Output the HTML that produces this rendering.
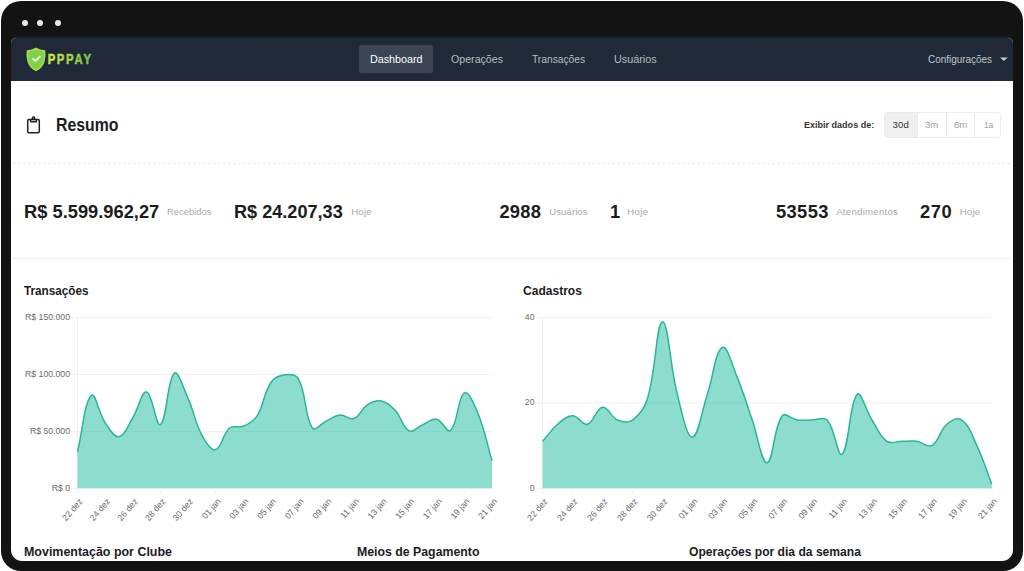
<!DOCTYPE html>
<html lang="pt-br">
<head>
<meta charset="utf-8">
<title>PPPAY - Dashboard</title>
<style>
html,body{margin:0;padding:0;background:#fff;}
body{width:1024px;height:571px;overflow:hidden;position:relative;font-family:"Liberation Sans",sans-serif;}
#frame{position:absolute;left:1.2px;top:1px;width:1021.6px;height:569.6px;background:#131313;border-radius:20px;}
#screen{position:absolute;left:11px;top:37.5px;width:1002px;height:523px;background:#fff;border-radius:5px 5px 11px 11px;overflow:hidden;}
#nav{position:absolute;left:0;top:0;width:1002px;height:43px;background:#1f2937;}
.dot{position:absolute;top:19.5px;width:6px;height:6px;border-radius:50%;background:#e9e9e9;}
#act{position:absolute;left:359px;top:44.5px;width:73.5px;height:28.5px;border-radius:3px;background:#3b4553;}
.t{position:absolute;white-space:pre;transform-origin:0 50%;font-family:"Liberation Sans",sans-serif;}
#dash{position:absolute;left:13.3px;top:163.3px;width:996.5px;height:0;border-top:1px dashed #e9e9e9;}
#sep{position:absolute;left:13.3px;top:258.4px;width:996.5px;height:1px;background:#eeeeee;}
#bg{position:absolute;left:884px;top:112px;width:116.5px;height:25.5px;border:1px solid #ececec;border-radius:3px;box-sizing:border-box;background:#fff;overflow:hidden;}
#bg i{position:absolute;top:0;width:1px;height:25px;background:#e9e9e9;}
#bg b{position:absolute;left:0;top:0;width:31.7px;height:25px;background:#f0f0f0;}
svg{position:absolute;left:0;top:0;}
.ax{font-family:"Liberation Sans",sans-serif;font-size:8.7px;fill:#6a6a6a;}
</style>
</head>
<body>
<div id="frame"></div>
<div class="dot" style="left:22px"></div>
<div class="dot" style="left:37px"></div>
<div class="dot" style="left:55px"></div>
<div style="position:absolute;left:13px;top:34.5px;width:998px;height:4px;background:linear-gradient(to bottom,#131313,#1c2430)"></div>
<div id="screen"><div id="nav"></div></div>
<div id="act"></div>
<div id="dash"></div>
<div id="sep"></div>
<div id="bg"><b></b><i style="left:31.7px"></i><i style="left:60.5px"></i><i style="left:89.2px"></i></div>
<svg width="1024" height="571" viewBox="0 0 1024 571">
<defs>
<clipPath id="clip"><rect x="11" y="37.5" width="1002" height="523" rx="8"/></clipPath>
</defs>
<!-- logo shield -->
<path d="M36 48.3 C33.4 50.2 30.6 50.9 27.4 51 C27.1 54.5 27.2 58.8 28.4 62.3 C29.8 66 32.6 68.8 36 70.4 C39.4 68.8 42.2 66 43.6 62.3 C44.8 58.8 44.9 54.5 44.6 51 C41.4 50.9 38.6 50.2 36 48.3 Z" fill="#7fd04a" stroke="#a9df4f" stroke-width="1.5" stroke-linejoin="round"/>
<path d="M33 58.9 L35.3 61 L39.8 56.6" fill="none" stroke="#effbe0" stroke-width="1.9" stroke-linecap="round" stroke-linejoin="round"/>
<g font-family="Liberation Sans, sans-serif" font-weight="700" font-size="14.2">
<text transform="translate(47.7 63.9) scale(0.8 1)" fill="#c9e24b" stroke="#c9e24b" stroke-width="0.5">P</text>
<text transform="translate(56.7 63.9) scale(0.8 1)" fill="#b6dc4b" stroke="#b6dc4b" stroke-width="0.5">P</text>
<text transform="translate(65.9 63.9) scale(0.8 1)" fill="#a2d64b" stroke="#a2d64b" stroke-width="0.5">P</text>
<text transform="translate(74.5 63.9) scale(0.8 1)" fill="#8fcf4b" stroke="#8fcf4b" stroke-width="0.5">A</text>
<text transform="translate(83.6 63.9) scale(0.8 1)" fill="#7cc94b" stroke="#7cc94b" stroke-width="0.5">Y</text>
</g>
<!-- caret -->
<path d="M1000 57.4 L1007.8 57.4 L1003.9 61 Z" fill="#c4c8ce"/>
<!-- clipboard -->
<g fill="none" stroke="#222" stroke-width="1.5" stroke-linejoin="round">
<rect x="27.7" y="119.5" width="11.6" height="13.2" rx="1.2"/>
<path d="M30.6 119.5 L30.6 121.8 L36.4 121.8 L36.4 119.5"/>
<circle cx="33.5" cy="118.2" r="1.2"/>
</g>
<g clip-path="url(#clip)">
<line x1="71.5" y1="317.60" x2="492.0" y2="317.60" stroke="#f0f0f0" stroke-width="1"/>
<text x="70.0" y="320.10" text-anchor="end" class="ax">R$ 150.000</text>
<line x1="71.5" y1="374.50" x2="492.0" y2="374.50" stroke="#f0f0f0" stroke-width="1"/>
<text x="70.0" y="377.00" text-anchor="end" class="ax">R$ 100.000</text>
<line x1="71.5" y1="431.40" x2="492.0" y2="431.40" stroke="#f0f0f0" stroke-width="1"/>
<text x="70.0" y="433.90" text-anchor="end" class="ax">R$ 50.000</text>
<line x1="71.5" y1="488.30" x2="492.0" y2="488.30" stroke="#f0f0f0" stroke-width="1"/>
<text x="70.0" y="490.80" text-anchor="end" class="ax">R$ 0</text>
<line x1="77.5" y1="317.6" x2="77.5" y2="494.3" stroke="#f0f0f0" stroke-width="1"/>
<text transform="translate(83.10 501.70) rotate(-49)" text-anchor="end" class="ax">22 dez</text>
<line x1="105.13" y1="488.3" x2="105.13" y2="494.3" stroke="#f4f4f4" stroke-width="1"/>
<text transform="translate(110.73 501.70) rotate(-49)" text-anchor="end" class="ax">24 dez</text>
<line x1="132.77" y1="488.3" x2="132.77" y2="494.3" stroke="#f4f4f4" stroke-width="1"/>
<text transform="translate(138.37 501.70) rotate(-49)" text-anchor="end" class="ax">26 dez</text>
<line x1="160.40" y1="488.3" x2="160.40" y2="494.3" stroke="#f4f4f4" stroke-width="1"/>
<text transform="translate(166.00 501.70) rotate(-49)" text-anchor="end" class="ax">28 dez</text>
<line x1="188.03" y1="488.3" x2="188.03" y2="494.3" stroke="#f4f4f4" stroke-width="1"/>
<text transform="translate(193.63 501.70) rotate(-49)" text-anchor="end" class="ax">30 dez</text>
<line x1="215.67" y1="488.3" x2="215.67" y2="494.3" stroke="#f4f4f4" stroke-width="1"/>
<text transform="translate(221.27 501.70) rotate(-49)" text-anchor="end" class="ax">01 jan</text>
<line x1="243.30" y1="488.3" x2="243.30" y2="494.3" stroke="#f4f4f4" stroke-width="1"/>
<text transform="translate(248.90 501.70) rotate(-49)" text-anchor="end" class="ax">03 jan</text>
<line x1="270.93" y1="488.3" x2="270.93" y2="494.3" stroke="#f4f4f4" stroke-width="1"/>
<text transform="translate(276.53 501.70) rotate(-49)" text-anchor="end" class="ax">05 jan</text>
<line x1="298.57" y1="488.3" x2="298.57" y2="494.3" stroke="#f4f4f4" stroke-width="1"/>
<text transform="translate(304.17 501.70) rotate(-49)" text-anchor="end" class="ax">07 jan</text>
<line x1="326.20" y1="488.3" x2="326.20" y2="494.3" stroke="#f4f4f4" stroke-width="1"/>
<text transform="translate(331.80 501.70) rotate(-49)" text-anchor="end" class="ax">09 jan</text>
<line x1="353.83" y1="488.3" x2="353.83" y2="494.3" stroke="#f4f4f4" stroke-width="1"/>
<text transform="translate(359.43 501.70) rotate(-49)" text-anchor="end" class="ax">11 jan</text>
<line x1="381.47" y1="488.3" x2="381.47" y2="494.3" stroke="#f4f4f4" stroke-width="1"/>
<text transform="translate(387.07 501.70) rotate(-49)" text-anchor="end" class="ax">13 jan</text>
<line x1="409.10" y1="488.3" x2="409.10" y2="494.3" stroke="#f4f4f4" stroke-width="1"/>
<text transform="translate(414.70 501.70) rotate(-49)" text-anchor="end" class="ax">15 jan</text>
<line x1="436.73" y1="488.3" x2="436.73" y2="494.3" stroke="#f4f4f4" stroke-width="1"/>
<text transform="translate(442.33 501.70) rotate(-49)" text-anchor="end" class="ax">17 jan</text>
<line x1="464.37" y1="488.3" x2="464.37" y2="494.3" stroke="#f4f4f4" stroke-width="1"/>
<text transform="translate(469.97 501.70) rotate(-49)" text-anchor="end" class="ax">19 jan</text>
<line x1="492.00" y1="488.3" x2="492.00" y2="494.3" stroke="#f4f4f4" stroke-width="1"/>
<text transform="translate(497.60 501.70) rotate(-49)" text-anchor="end" class="ax">21 jan</text>
<path d="M77.50 451.54 C83.03 429.10 84.09 402.97 91.32 395.44 C95.14 391.45 98.40 412.69 105.13 422.75 C109.46 429.22 113.91 437.66 118.95 436.75 C124.97 435.66 127.85 425.73 132.77 417.74 C138.90 407.79 141.58 390.68 146.58 391.91 C152.64 393.41 155.97 427.55 160.40 424.57 C167.02 420.13 167.04 380.16 174.22 373.36 C178.09 369.69 183.37 387.99 188.03 398.40 C194.42 412.66 194.55 421.49 201.85 435.04 C205.61 442.02 210.81 450.96 215.67 449.72 C221.87 448.14 222.31 434.07 229.48 427.99 C233.36 424.70 238.38 428.45 243.30 426.28 C249.43 423.58 253.53 421.50 257.12 415.81 C264.58 403.97 263.25 393.89 270.93 382.47 C274.30 377.45 278.98 375.44 284.75 374.73 C290.03 374.08 296.12 374.33 298.57 379.05 C307.17 395.63 303.90 415.06 312.38 427.99 C314.95 431.90 320.62 423.78 326.20 421.16 C331.67 418.59 334.33 415.55 340.02 415.01 C345.38 414.50 349.19 420.30 353.83 418.54 C360.24 416.11 361.24 408.61 367.65 404.54 C372.30 401.60 376.38 399.93 381.47 401.02 C387.43 402.29 390.81 405.63 395.28 410.46 C401.86 417.56 402.26 427.34 409.10 430.83 C413.31 432.98 417.33 426.92 422.92 424.57 C428.38 422.28 431.72 418.15 436.73 419.22 C442.77 420.52 447.14 433.73 450.55 430.49 C458.20 423.22 457.58 396.99 464.37 392.94 C468.64 390.39 474.42 404.75 478.18 413.99 C485.47 431.88 486.47 442.05 492.00 460.76 L492.00 488.30 L77.50 488.30 Z" fill="rgba(26,188,156,0.5)"/>
<path d="M77.50 451.54 C83.03 429.10 84.09 402.97 91.32 395.44 C95.14 391.45 98.40 412.69 105.13 422.75 C109.46 429.22 113.91 437.66 118.95 436.75 C124.97 435.66 127.85 425.73 132.77 417.74 C138.90 407.79 141.58 390.68 146.58 391.91 C152.64 393.41 155.97 427.55 160.40 424.57 C167.02 420.13 167.04 380.16 174.22 373.36 C178.09 369.69 183.37 387.99 188.03 398.40 C194.42 412.66 194.55 421.49 201.85 435.04 C205.61 442.02 210.81 450.96 215.67 449.72 C221.87 448.14 222.31 434.07 229.48 427.99 C233.36 424.70 238.38 428.45 243.30 426.28 C249.43 423.58 253.53 421.50 257.12 415.81 C264.58 403.97 263.25 393.89 270.93 382.47 C274.30 377.45 278.98 375.44 284.75 374.73 C290.03 374.08 296.12 374.33 298.57 379.05 C307.17 395.63 303.90 415.06 312.38 427.99 C314.95 431.90 320.62 423.78 326.20 421.16 C331.67 418.59 334.33 415.55 340.02 415.01 C345.38 414.50 349.19 420.30 353.83 418.54 C360.24 416.11 361.24 408.61 367.65 404.54 C372.30 401.60 376.38 399.93 381.47 401.02 C387.43 402.29 390.81 405.63 395.28 410.46 C401.86 417.56 402.26 427.34 409.10 430.83 C413.31 432.98 417.33 426.92 422.92 424.57 C428.38 422.28 431.72 418.15 436.73 419.22 C442.77 420.52 447.14 433.73 450.55 430.49 C458.20 423.22 457.58 396.99 464.37 392.94 C468.64 390.39 474.42 404.75 478.18 413.99 C485.47 431.88 486.47 442.05 492.00 460.76" fill="none" stroke="#2ab599" stroke-width="1.5" stroke-linejoin="round"/>
<line x1="536.6" y1="317.60" x2="991.8" y2="317.60" stroke="#f0f0f0" stroke-width="1"/>
<text x="534.5" y="320.10" text-anchor="end" class="ax">40</text>
<line x1="536.6" y1="402.95" x2="991.8" y2="402.95" stroke="#f0f0f0" stroke-width="1"/>
<text x="534.5" y="405.45" text-anchor="end" class="ax">20</text>
<line x1="536.6" y1="488.30" x2="991.8" y2="488.30" stroke="#f0f0f0" stroke-width="1"/>
<text x="534.5" y="490.80" text-anchor="end" class="ax">0</text>
<line x1="542.6" y1="317.6" x2="542.6" y2="494.3" stroke="#f0f0f0" stroke-width="1"/>
<text transform="translate(548.20 501.70) rotate(-49)" text-anchor="end" class="ax">22 dez</text>
<line x1="572.55" y1="488.3" x2="572.55" y2="494.3" stroke="#f4f4f4" stroke-width="1"/>
<text transform="translate(578.15 501.70) rotate(-49)" text-anchor="end" class="ax">24 dez</text>
<line x1="602.49" y1="488.3" x2="602.49" y2="494.3" stroke="#f4f4f4" stroke-width="1"/>
<text transform="translate(608.09 501.70) rotate(-49)" text-anchor="end" class="ax">26 dez</text>
<line x1="632.44" y1="488.3" x2="632.44" y2="494.3" stroke="#f4f4f4" stroke-width="1"/>
<text transform="translate(638.04 501.70) rotate(-49)" text-anchor="end" class="ax">28 dez</text>
<line x1="662.39" y1="488.3" x2="662.39" y2="494.3" stroke="#f4f4f4" stroke-width="1"/>
<text transform="translate(667.99 501.70) rotate(-49)" text-anchor="end" class="ax">30 dez</text>
<line x1="692.33" y1="488.3" x2="692.33" y2="494.3" stroke="#f4f4f4" stroke-width="1"/>
<text transform="translate(697.93 501.70) rotate(-49)" text-anchor="end" class="ax">01 jan</text>
<line x1="722.28" y1="488.3" x2="722.28" y2="494.3" stroke="#f4f4f4" stroke-width="1"/>
<text transform="translate(727.88 501.70) rotate(-49)" text-anchor="end" class="ax">03 jan</text>
<line x1="752.23" y1="488.3" x2="752.23" y2="494.3" stroke="#f4f4f4" stroke-width="1"/>
<text transform="translate(757.83 501.70) rotate(-49)" text-anchor="end" class="ax">05 jan</text>
<line x1="782.17" y1="488.3" x2="782.17" y2="494.3" stroke="#f4f4f4" stroke-width="1"/>
<text transform="translate(787.77 501.70) rotate(-49)" text-anchor="end" class="ax">07 jan</text>
<line x1="812.12" y1="488.3" x2="812.12" y2="494.3" stroke="#f4f4f4" stroke-width="1"/>
<text transform="translate(817.72 501.70) rotate(-49)" text-anchor="end" class="ax">09 jan</text>
<line x1="842.07" y1="488.3" x2="842.07" y2="494.3" stroke="#f4f4f4" stroke-width="1"/>
<text transform="translate(847.67 501.70) rotate(-49)" text-anchor="end" class="ax">11 jan</text>
<line x1="872.01" y1="488.3" x2="872.01" y2="494.3" stroke="#f4f4f4" stroke-width="1"/>
<text transform="translate(877.61 501.70) rotate(-49)" text-anchor="end" class="ax">13 jan</text>
<line x1="901.96" y1="488.3" x2="901.96" y2="494.3" stroke="#f4f4f4" stroke-width="1"/>
<text transform="translate(907.56 501.70) rotate(-49)" text-anchor="end" class="ax">15 jan</text>
<line x1="931.91" y1="488.3" x2="931.91" y2="494.3" stroke="#f4f4f4" stroke-width="1"/>
<text transform="translate(937.51 501.70) rotate(-49)" text-anchor="end" class="ax">17 jan</text>
<line x1="961.85" y1="488.3" x2="961.85" y2="494.3" stroke="#f4f4f4" stroke-width="1"/>
<text transform="translate(967.45 501.70) rotate(-49)" text-anchor="end" class="ax">19 jan</text>
<line x1="991.80" y1="488.3" x2="991.80" y2="494.3" stroke="#f4f4f4" stroke-width="1"/>
<text transform="translate(997.40 501.70) rotate(-49)" text-anchor="end" class="ax">21 jan</text>
<path d="M542.60 441.36 C548.59 434.53 550.76 430.11 557.57 424.29 C562.74 419.87 566.56 415.75 572.55 415.75 C578.54 415.75 582.35 425.76 587.52 424.29 C594.33 422.35 596.08 408.13 602.49 407.22 C608.06 406.42 610.66 417.11 617.47 420.02 C622.64 422.23 628.07 423.13 632.44 420.02 C640.05 414.60 644.42 408.49 647.41 398.68 C656.40 369.23 656.23 322.74 662.39 321.87 C668.21 321.04 669.92 365.80 677.36 394.42 C681.90 411.89 686.34 437.09 692.33 437.09 C698.32 437.09 701.57 411.57 707.31 394.42 C713.55 375.72 715.14 351.54 722.28 347.47 C727.12 344.71 732.16 365.01 737.25 377.35 C744.14 394.03 746.24 402.95 752.23 420.02 C758.22 437.09 761.47 463.51 767.20 462.69 C773.45 461.80 773.07 428.72 782.17 415.75 C785.05 411.65 791.04 419.15 797.15 420.02 C803.02 420.86 806.13 420.02 812.12 420.02 C818.11 420.02 823.66 416.11 827.09 420.02 C835.64 429.76 837.55 458.02 842.07 454.16 C849.53 447.78 848.95 403.63 857.04 394.42 C860.93 389.98 865.64 410.03 872.01 420.02 C877.62 428.80 879.38 435.94 886.99 441.36 C891.36 444.47 895.97 441.36 901.96 441.36 C907.95 441.36 911.06 440.52 916.93 441.36 C923.04 442.23 927.43 448.18 931.91 445.62 C939.41 441.35 939.38 430.70 946.88 424.29 C951.36 420.46 957.73 417.08 961.85 420.02 C969.71 425.62 971.81 434.91 976.83 445.62 C983.79 460.52 985.81 468.67 991.80 484.03 L991.80 488.30 L542.60 488.30 Z" fill="rgba(26,188,156,0.5)"/>
<path d="M542.60 441.36 C548.59 434.53 550.76 430.11 557.57 424.29 C562.74 419.87 566.56 415.75 572.55 415.75 C578.54 415.75 582.35 425.76 587.52 424.29 C594.33 422.35 596.08 408.13 602.49 407.22 C608.06 406.42 610.66 417.11 617.47 420.02 C622.64 422.23 628.07 423.13 632.44 420.02 C640.05 414.60 644.42 408.49 647.41 398.68 C656.40 369.23 656.23 322.74 662.39 321.87 C668.21 321.04 669.92 365.80 677.36 394.42 C681.90 411.89 686.34 437.09 692.33 437.09 C698.32 437.09 701.57 411.57 707.31 394.42 C713.55 375.72 715.14 351.54 722.28 347.47 C727.12 344.71 732.16 365.01 737.25 377.35 C744.14 394.03 746.24 402.95 752.23 420.02 C758.22 437.09 761.47 463.51 767.20 462.69 C773.45 461.80 773.07 428.72 782.17 415.75 C785.05 411.65 791.04 419.15 797.15 420.02 C803.02 420.86 806.13 420.02 812.12 420.02 C818.11 420.02 823.66 416.11 827.09 420.02 C835.64 429.76 837.55 458.02 842.07 454.16 C849.53 447.78 848.95 403.63 857.04 394.42 C860.93 389.98 865.64 410.03 872.01 420.02 C877.62 428.80 879.38 435.94 886.99 441.36 C891.36 444.47 895.97 441.36 901.96 441.36 C907.95 441.36 911.06 440.52 916.93 441.36 C923.04 442.23 927.43 448.18 931.91 445.62 C939.41 441.35 939.38 430.70 946.88 424.29 C951.36 420.46 957.73 417.08 961.85 420.02 C969.71 425.62 971.81 434.91 976.83 445.62 C983.79 460.52 985.81 468.67 991.80 484.03" fill="none" stroke="#2ab599" stroke-width="1.5" stroke-linejoin="round"/>
</g>
</svg>
<span class="t" style="left:369.80px;top:54.25px;font-size:11.40px;line-height:11.40px;font-weight:400;color:#ffffff;transform:scaleX(0.9420);">Dashboard</span>
<span class="t" style="left:451.20px;top:54.25px;font-size:11.40px;line-height:11.40px;font-weight:400;color:#b9bec5;transform:scaleX(0.9333);">Operações</span>
<span class="t" style="left:531.90px;top:54.25px;font-size:11.40px;line-height:11.40px;font-weight:400;color:#b9bec5;transform:scaleX(0.8986);">Transações</span>
<span class="t" style="left:613.60px;top:54.25px;font-size:11.40px;line-height:11.40px;font-weight:400;color:#b9bec5;transform:scaleX(0.9499);">Usuários</span>
<span class="t" style="left:927.90px;top:54.80px;font-size:10.40px;line-height:10.40px;font-weight:400;color:#c4c8ce;transform:scaleX(0.9565);">Configurações</span>
<span class="t" style="left:56.40px;top:116.26px;font-size:18.00px;line-height:18.00px;font-weight:700;color:#1b1c1d;transform:scaleX(0.8787);">Resumo</span>
<span class="t" style="left:804.40px;top:120.37px;font-size:9.60px;line-height:9.60px;font-weight:700;color:#333;transform:scaleX(0.9405);">Exibir dados de:</span>
<span class="t" style="left:24.00px;top:203.41px;font-size:18.30px;line-height:18.30px;font-weight:700;color:#1b1c1d;letter-spacing:0.007px;">R$ 5.599.962,27</span>
<span class="t" style="left:167.40px;top:206.57px;font-size:9.60px;line-height:9.60px;font-weight:400;color:#a6aab0;transform:scaleX(0.9814);">Recebidos</span>
<span class="t" style="left:234.30px;top:203.41px;font-size:18.30px;line-height:18.30px;font-weight:700;color:#1b1c1d;transform:scaleX(0.9902);">R$ 24.207,33</span>
<span class="t" style="left:351.20px;top:206.57px;font-size:9.60px;line-height:9.60px;font-weight:400;color:#a6aab0;letter-spacing:0.255px;">Hoje</span>
<span class="t" style="left:499.40px;top:203.41px;font-size:18.30px;line-height:18.30px;font-weight:700;color:#1b1c1d;letter-spacing:0.309px;">2988</span>
<span class="t" style="left:549.20px;top:206.57px;font-size:9.60px;line-height:9.60px;font-weight:400;color:#a6aab0;letter-spacing:0.077px;">Usuários</span>
<span class="t" style="left:610.10px;top:203.41px;font-size:18.30px;line-height:18.30px;font-weight:700;color:#1b1c1d;letter-spacing:0.000px;">1</span>
<span class="t" style="left:627.20px;top:206.57px;font-size:9.60px;line-height:9.60px;font-weight:400;color:#a6aab0;letter-spacing:0.355px;">Hoje</span>
<span class="t" style="left:775.90px;top:203.41px;font-size:18.30px;line-height:18.30px;font-weight:700;color:#1b1c1d;letter-spacing:0.414px;">53553</span>
<span class="t" style="left:836.20px;top:206.57px;font-size:9.60px;line-height:9.60px;font-weight:400;color:#a6aab0;letter-spacing:0.275px;">Atendimentos</span>
<span class="t" style="left:919.90px;top:203.41px;font-size:18.30px;line-height:18.30px;font-weight:700;color:#1b1c1d;letter-spacing:0.642px;">270</span>
<span class="t" style="left:959.70px;top:206.57px;font-size:9.60px;line-height:9.60px;font-weight:400;color:#a6aab0;letter-spacing:0.255px;">Hoje</span>
<span class="t" style="left:24.40px;top:284.49px;font-size:13.60px;line-height:13.60px;font-weight:700;color:#1b1c1d;transform:scaleX(0.8635);">Transações</span>
<span class="t" style="left:523.20px;top:284.49px;font-size:13.60px;line-height:13.60px;font-weight:700;color:#1b1c1d;transform:scaleX(0.8859);">Cadastros</span>
<span class="t" style="left:23.80px;top:544.99px;font-size:13.60px;line-height:13.60px;font-weight:700;color:#1b1c1d;transform:scaleX(0.9156);">Movimentação por Clube</span>
<span class="t" style="left:356.60px;top:544.99px;font-size:13.60px;line-height:13.60px;font-weight:700;color:#1b1c1d;transform:scaleX(0.9052);">Meios de Pagamento</span>
<span class="t" style="left:689.40px;top:544.99px;font-size:13.60px;line-height:13.60px;font-weight:700;color:#1b1c1d;transform:scaleX(0.8887);">Operações por dia da semana</span>
<span class="t" style="left:892.50px;top:120.37px;font-size:9.60px;line-height:9.60px;font-weight:400;color:#333;letter-spacing:0.192px;">30d</span>
<span class="t" style="left:924.50px;top:120.37px;font-size:9.60px;line-height:9.60px;font-weight:400;color:#a0a0a0;transform:scaleX(0.9904);">3m</span>
<span class="t" style="left:953.80px;top:120.37px;font-size:9.60px;line-height:9.60px;font-weight:400;color:#a0a0a0;transform:scaleX(0.9904);">6m</span>
<span class="t" style="left:983.70px;top:120.37px;font-size:9.60px;line-height:9.60px;font-weight:400;color:#a0a0a0;transform:scaleX(0.8621);">1a</span>
</body>
</html>
